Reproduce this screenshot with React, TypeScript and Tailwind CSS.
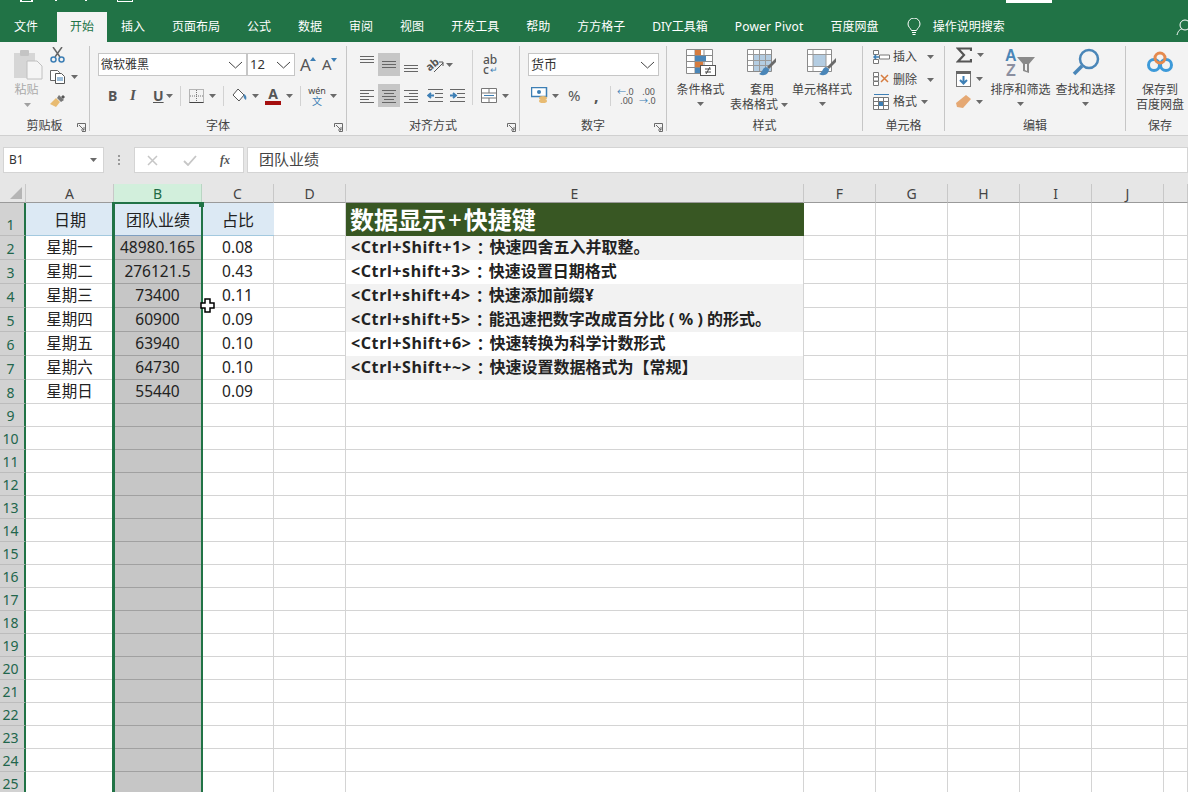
import type { ReactNode } from "react";

const CJK = "font-['Noto_Sans','Noto_Sans_CJK_SC',sans-serif]";

const TABS = ["开始", "插入", "页面布局", "公式", "数据", "审阅", "视图", "开发工具", "帮助", "方方格子", "DIY工具箱", "Power Pivot", "百度网盘"];

const COLS = [
  { name: "A", w: "w-[88px]" },
  { name: "B", w: "w-[88px]" },
  { name: "C", w: "w-[72px]" },
  { name: "D", w: "w-[72px]" },
  { name: "E", w: "w-[458px]" },
  { name: "F", w: "w-[72px]" },
  { name: "G", w: "w-[72px]" },
  { name: "H", w: "w-[72px]" },
  { name: "I", w: "w-[72px]" },
  { name: "J", w: "w-[72px]" },
  { name: "", w: "w-[24px]" },
];

const DATA = [
  ["星期一", "48980.165", "0.08"],
  ["星期二", "276121.5", "0.43"],
  ["星期三", "73400", "0.11"],
  ["星期四", "60900", "0.09"],
  ["星期五", "63940", "0.10"],
  ["星期六", "64730", "0.10"],
  ["星期日", "55440", "0.09"],
];

const NOTES: { key: string; body: ReactNode; band: boolean }[] = [
  { key: "<Ctrl+Shift+1>", body: "快速四舍五入并取整。", band: true },
  { key: "<Ctrl+shift+3>", body: "快速设置日期格式", band: false },
  { key: "<Ctrl+shift+4>", body: "快速添加前缀¥", band: true },
  {
    key: "<Ctrl+shift+5>",
    body: (
      <>
        能迅速把数字改成百分比
        <span className="inline-block w-[14px] text-center">(</span>%<span className="inline-block w-[14px] text-center">)</span>
        的形式。
      </>
    ),
    band: true,
  },
  { key: "<Ctrl+Shift+6>", body: "快速转换为科学计数形式", band: false },
  { key: "<Ctrl+Shift+~>", body: "快速设置数据格式为【常规】", band: true },
  { key: "", body: "", band: false },
];

function Caret({ className = "" }: { className?: string }) {
  return (
    <svg width="7" height="4" viewBox="0 0 7 4" className={"shrink-0 " + className}>
      <path d="M0 0h7L3.5 4z" fill="#6a6a6a" />
    </svg>
  );
}

function Chevron() {
  return (
    <svg width="15" height="8" viewBox="0 0 15 8" className="shrink-0">
      <path d="M1 1l6.5 6L14 1" fill="none" stroke="#444" strokeWidth="1" />
    </svg>
  );
}

function Launcher() {
  return (
    <svg width="9" height="9" viewBox="0 0 9 9" className="shrink-0">
      <path d="M.5 4V.5H8.500V8.500H5M2 2l5 5M7 4v3H4" fill="none" stroke="#6a6a6a" strokeWidth="1" />
    </svg>
  );
}

function Group({ w, label, launcher, children }: { w: string; label: string; launcher?: boolean; children: ReactNode }) {
  return (
    <div className={w + " h-full flex shrink-0"}>
      <div className="flex-1 min-w-0 flex flex-col">
        <div className="h-[75px] relative flex">{children}</div>
        <div className="flex-1 flex items-center justify-center relative text-[12px] text-[#444] leading-none">
          {label}
          {launcher && (
            <span className="absolute right-[3px] top-[6px]">
              <Launcher />
            </span>
          )}
        </div>
      </div>
      <div className="w-px h-[85px] mt-[4px] bg-[#c6c6c6]" />
    </div>
  );
}

function Sep({ h = "h-[20px]" }: { h?: string }) {
  return <div className={"w-px bg-[#d2d2d2] shrink-0 " + h} />;
}

function Lines({ rows, active }: { rows: number[][]; active?: boolean }) {
  return (
    <div className={"w-[22px] h-[23px] flex items-center justify-center shrink-0 " + (active ? "bg-[#c6c6c6]" : "")}>
      <svg width="16" height="14" viewBox="0 0 16 14" className="overflow-visible">
        {rows.map((r, i) => (
          <path key={i} d={"M" + r[0] + " " + (r[2] + 0.5) + "H" + r[1]} stroke="#666" strokeWidth="1" />
        ))}
      </svg>
    </div>
  );
}

const TOP_A = [[1, 15, -2], [1, 15, 1], [1, 15, 4]];
const MID_A = [[1, 15, 3], [1, 15, 6], [1, 15, 9]];
const BOT_A = [[1, 15, 7], [1, 15, 10], [1, 15, 13]];
const LEFT_A = [[1, 15, 1], [1, 10, 4], [1, 15, 7], [1, 10, 10], [1, 15, 13]];
const CENTER_A = [[1, 15, 1], [3, 13, 4], [1, 15, 7], [3, 13, 10], [1, 15, 13]];
const RIGHT_A = [[1, 15, 1], [6, 15, 4], [1, 15, 7], [6, 15, 10], [1, 15, 13]];

function Indent({ flip }: { flip?: boolean }) {
  return (
    <svg width="17" height="14" viewBox="0 0 17 14" className="shrink-0">
      <g stroke="#666" strokeWidth="1">
        <path d="M1 .5h15M8 4.500h8M8 8.500h8M1 12.500h15" />
      </g>
      <path d={flip ? "M1 6.500h5M4 4l3 2.500L4 9" : "M7 6.500H2M4 4L1 6.500 4 9"} fill="none" stroke="#3d7fb5" strokeWidth="1.800" />
    </svg>
  );
}

function Dropdown({ w, text, big }: { w: string; text: string; big?: boolean }) {
  return (
    <div className={w + " h-[23px] bg-white border border-[#c6c6c6] flex items-center justify-between pl-[2px] pr-[3px] shrink-0"}>
      <span className={(big ? "text-[13px]" : "text-[12px]") + " text-[#333] leading-none"}>{text}</span>
      <Chevron />
    </div>
  );
}

function Bigbtn({ w, icon, lines, caret }: { w: string; icon: ReactNode; lines: string[]; caret: "below" | "inline" | "none" }) {
  return (
    <div className={w + " flex flex-col items-center shrink-0"}>
      <div className="h-[40px] pt-[7px] flex items-start justify-center">{icon}</div>
      <div className="text-[12px] leading-[15px] text-[#444] text-center whitespace-nowrap flex flex-col items-center">
        {lines.map((l, i) => (
          <span key={i} className={"flex items-center gap-[3px] " + (caret === "inline" && i === lines.length - 1 ? "mr-[6px]" : "")}>
            {l}
            {caret === "inline" && i === lines.length - 1 && <Caret />}
          </span>
        ))}
      </div>
      {caret === "below" && <Caret className="mt-[5px]" />}
    </div>
  );
}

function StyleIcon({ kind }: { kind: "cond" | "table" | "cell" }) {
  if (kind === "cond") {
    return (
      <svg width="30" height="27" viewBox="0 0 30 27">
        <path d="M.5.5h26v24H.5zM9 .5v24M18 .5v24M.5 6.500h26M.5 12.500h26M.5 18.500h26" fill="#fff" stroke="#8a8a8a" strokeWidth="1" />
        <rect x="9" y="1" width="6" height="5" fill="#d67c3f" />
        <rect x="9" y="7" width="11" height="5" fill="#4a86b8" />
        <rect x="9" y="13" width="8" height="5" fill="#d67c3f" />
        <rect x="9" y="19" width="5" height="5" fill="#4a86b8" />
        <rect x="14.500" y="16.500" width="15" height="10" fill="#fff" stroke="#555" />
        <path d="M19 20h6M19 23h6M24 18l-4 7" stroke="#444" fill="none" strokeWidth="1" />
      </svg>
    );
  }
  return (
    <svg width="30" height="29" viewBox="0 0 30 29">
      <path d="M.5.5h24v22H.5z" fill="#fff" stroke="#8a8a8a" />
      {kind === "table" ? (
        <>
          <rect x="7" y="6" width="17" height="16" fill="#b4cde2" />
          <path d="M6.500 1v21M12.500 1v21M18.500 1v21M1 5.500h23M1 11.500h23M1 16.500h23" stroke="#9a9a9a" />
        </>
      ) : (
        <>
          <rect x="6" y="6" width="13" height="11" fill="#b4cde2" />
          <path d="M6 1v21M19 1v21M1 5.500h23M1 17.500h23" stroke="#9a9a9a" />
        </>
      )}
      <path d="M29 9l-9 9 2 2 7-7z" fill="#6a6a6a" />
      <path d="M19 18c-4 1-3 5-7 7 5 3 10 0 10-5z" fill="#4a86b8" />
    </svg>
  );
}

function CellRow({ icon, text, pad }: { icon: ReactNode; text: string; pad: string }) {
  return (
    <div className="h-[22.5px] flex items-center">
      <span className="w-[20px] shrink-0 flex">{icon}</span>
      <span className="text-[12px] text-[#444] leading-none">{text}</span>
      <Caret className={pad} />
    </div>
  );
}

function Ribbon() {
  return (
    <div className="h-[93px] bg-[#f3f3f3] flex shrink-0 overflow-hidden">
      <Group w="w-[90px]" label="剪贴板" launcher>
        <div className="w-[48px] pl-[9px] flex flex-col items-center pt-[8px]">
          <svg width="29" height="30" viewBox="0 0 29 30">
            <rect x="0" y="3" width="21" height="25" fill="#d6d6d6" />
            <rect x="6" y="0" width="9" height="6" rx="1" fill="#c4c4c4" />
            <path d="M13 11h10l5 5v13H13z" fill="#f5f5f5" stroke="#c0c0c0" />
          </svg>
          <span className="text-[12px] leading-none text-[#aaa] mt-[4px] -ml-[4px]">粘贴</span>
          <Caret className="mt-[7px] -ml-[2px] opacity-60" />
        </div>
        <div className="pl-[2px] pt-[5px] flex flex-col gap-[7px]">
          <svg width="15" height="16" viewBox="0 0 15 16">
            <path d="M3 0l7 10M12 0L5 10" stroke="#666" strokeWidth="1.500" fill="none" />
            <circle cx="3.500" cy="12.500" r="2.500" fill="none" stroke="#3d7fb5" strokeWidth="1.500" />
            <circle cx="11.500" cy="12.500" r="2.500" fill="none" stroke="#3d7fb5" strokeWidth="1.500" />
          </svg>
          <div className="flex items-center gap-[6px]">
            <svg width="15" height="14" viewBox="0 0 15 14">
              <path d="M.5.500h7l2 2v8H.5z" fill="#fff" stroke="#666" />
              <path d="M5.500 3.500h6l3 3v7h-9z" fill="#fff" stroke="#555" />
              <path d="M7 8h6M7 10h6" stroke="#3d7fb5" />
            </svg>
            <Caret />
          </div>
          <svg width="17" height="16" viewBox="0 0 17 16" className="mt-[1px]">
            <path d="M11 5l2-2 2 2-2 2z" fill="#555" />
            <path d="M9 3l5 5-3 2-4-4z" fill="#777" />
            <path d="M6 6l4 4-4 5-6-3z" fill="#e8bb72" />
          </svg>
        </div>
      </Group>

      <Group w="w-[257px]" label="字体" launcher>
        <div className="flex flex-col w-full pl-[8px] pt-[11px]">
          <div className="flex items-center h-[23px]">
            <Dropdown w="w-[149px]" text="微软雅黑" />
            <Dropdown w="w-[48px]" text="12" big />
            <span className="ml-[5px] flex items-end w-[22px] text-[17px] leading-none text-[#555]">
              A
              <svg width="6" height="4" viewBox="0 0 6 4" className="mb-[12px] -ml-[1px]"><path d="M3 0l3 4H0z" fill="#3d7fb5" /></svg>
            </span>
            <span className="flex items-end text-[15px] leading-none text-[#555]">
              A
              <svg width="6" height="4" viewBox="0 0 6 4" className="mb-[10px] -ml-[1px]"><path d="M3 4L6 0H0z" fill="#3d7fb5" /></svg>
            </span>
          </div>
          <div className="flex items-center h-[21px] mt-[9px] text-[#555]">
            <span className="ml-[10px] w-[22px] text-[14px] font-bold leading-none">B</span>
            <span className="w-[23px] text-[15px] italic font-bold leading-none font-['Liberation_Serif',serif]">I</span>
            <span className="w-[13px] text-[14px] font-bold underline leading-none">U</span>
            <Caret />
            <span className="w-[7px]" />
            <Sep />
            <svg width="15" height="14" viewBox="0 0 15 14" className="ml-[8px]">
              <path d="M.5.500h14v13H.5zM7.500 1v12M1 7h13" fill="none" stroke="#777" strokeDasharray="1 1" />
              <path d="M.5 13.500h14" stroke="#444" />
            </svg>
            <Caret className="ml-[5px]" />
            <span className="w-[7px]" />
            <Sep />
            <svg width="16" height="15" viewBox="0 0 16 15" className="ml-[8px]">
              <path d="M6 1l6 6-5 6-6-6z" fill="#fff" stroke="#555" />
              <path d="M12 6c2 1 3 3 2 6-2-1-3-3-2-6z" fill="#4a86b8" />
            </svg>
            <Caret className="ml-[4px]" />
            <span className="ml-[6px] w-[16px] flex flex-col items-center text-[14px] leading-[14px] font-bold">
              A
              <span className="w-[16px] h-[4px] bg-[#a50f0f]" />
            </span>
            <Caret className="ml-[5px]" />
            <span className="w-[7px]" />
            <Sep />
            <span className="ml-[8px] flex flex-col items-center w-[16px] text-[9px] leading-[10px] text-[#444]">
              wén
              <span className="text-[#3d7fb5] text-[10px] leading-[10px]">文</span>
            </span>
            <Caret className="ml-[5px]" />
          </div>
        </div>
      </Group>

      <Group w="w-[173px]" label="对齐方式" launcher>
        <div className="flex flex-col pl-[9px] pt-[11px]">
          <div className="flex items-center h-[23px]">
            <Lines rows={TOP_A} />
            <Lines rows={MID_A} active />
            <Lines rows={BOT_A} />
            <svg width="17" height="16" viewBox="0 0 17 16" className="ml-[5px] overflow-visible">
              <text x="-1" y="11" fontSize="11" fontWeight="bold" fill="#555" fontFamily="Noto Sans" transform="rotate(-40 6 8)">ab</text>
              <path d="M7 15l9-9M12 5h4v4" fill="none" stroke="#555" />
            </svg>
            <Caret className="ml-[2px]" />
          </div>
          <div className="flex items-center h-[23px] mt-[8px]">
            <Lines rows={LEFT_A} />
            <Lines rows={CENTER_A} active />
            <Lines rows={RIGHT_A} />
            <span className="w-[5px]" />
            <Indent />
            <span className="w-[5px]" />
            <Indent flip />
          </div>
        </div>
        <div className="ml-[6px] mt-[8px] flex">
          <Sep h="h-[55px]" />
        </div>
        <div className="flex flex-col pl-[8px] pt-[11px]">
          <div className="h-[23px] pl-[2px] flex flex-col items-start justify-center text-[12px] leading-[10px] font-medium text-[#555]">
            <span>ab</span>
            <span className="flex items-center">c<span className="text-[#3d7fb5] ml-[1px] text-[9px]">↵</span></span>
          </div>
          <div className="flex items-center h-[23px] mt-[8px]">
            <svg width="16" height="15" viewBox="0 0 16 15">
              <path d="M.5.500h15v14H.5zM1 5h14M1 10h14M8 1v4M8 10v4" fill="#fff" stroke="#777" />
              <path d="M3 7.500h10" stroke="#3d7fb5" />
            </svg>
            <Caret className="ml-[5px]" />
          </div>
        </div>
      </Group>

      <Group w="w-[147px]" label="数字" launcher>
        <div className="flex flex-col pl-[8px] pt-[11px]">
          <Dropdown w="w-[131px]" text="货币" big />
          <div className="flex items-center h-[21px] mt-[9px]">
            <svg width="18" height="18" viewBox="0 0 18 18" className="ml-[3px]">
              <rect x="0.500" y="0.500" width="15" height="9" fill="#fff" stroke="#3d7fb5" strokeWidth="1.500" />
              <circle cx="8" cy="5" r="2" fill="#3d7fb5" />
              <ellipse cx="12" cy="11" rx="4" ry="2" fill="#e8bb72" />
              <ellipse cx="12" cy="14" rx="4" ry="2" fill="#e8bb72" />
            </svg>
            <Caret className="ml-[3px]" />
            <span className="ml-[9px] w-[26px] text-[15px] text-[#555] leading-none">%</span>
            <span className="w-[16px] text-[16px] font-bold text-[#555] leading-none">,</span>
            <Sep />
            <span className="ml-[6px] w-[16px] flex flex-col text-[9px] leading-[9px] text-[#555] text-right">
              <span><span className="text-[#3d7fb5]">←</span>.0</span>
              <span>.00</span>
            </span>
            <span className="ml-[6px] w-[16px] flex flex-col text-[9px] leading-[9px] text-[#555] text-right">
              <span>.00</span>
              <span><span className="text-[#3d7fb5]">→</span>.0</span>
            </span>
          </div>
        </div>
      </Group>

      <Group w="w-[196px]" label="样式">
        <Bigbtn w="w-[67px]" caret="below" lines={["条件格式"]} icon={<StyleIcon kind="cond" />} />
        <Bigbtn w="w-[56px]" caret="inline" lines={["套用", "表格格式"]} icon={<StyleIcon kind="table" />} />
        <Bigbtn w="w-[64px]" caret="below" lines={["单元格样式"]} icon={<StyleIcon kind="cell" />} />
      </Group>

      <Group w="w-[82px]" label="单元格">
        <div className="pl-[10px] pt-[4px] flex flex-col">
          <CellRow
            pad="ml-[10px]"
            text="插入"
            icon={
              <svg width="17" height="15" viewBox="0 0 17 15">
                <path d="M.5.500h5v4h-5zM.5 9.500h5v4h-5zM6.500 5h10v4h-10z" fill="#fff" stroke="#777" />
                <path d="M6 7H1M3 5L1 7l2 2" fill="none" stroke="#3d7fb5" strokeWidth="1.500" />
              </svg>
            }
          />
          <CellRow
            pad="ml-[10px]"
            text="删除"
            icon={
              <svg width="17" height="15" viewBox="0 0 17 15">
                <path d="M.5.500h5v4h-5zM.5 5h5v4h-5zM.5 9.500h5v4h-5z" fill="#fff" stroke="#777" />
                <path d="M8 3l7 7M15 3l-7 7" stroke="#d67c3f" strokeWidth="1.500" />
              </svg>
            }
          />
          <CellRow
            pad="ml-[4px]"
            text="格式"
            icon={
              <svg width="17" height="16" viewBox="0 0 17 16">
                <path d="M1 .5h15" stroke="#3d7fb5" />
                <path d="M.5 3.500h15v12H.5zM5.500 4v11M10.500 4v11M1 7.500h14M1 11.500h14" fill="#fff" stroke="#777" />
                <rect x="6" y="8" width="4" height="4" fill="#3d7fb5" />
              </svg>
            }
          />
        </div>
      </Group>

      <Group w="w-[181px]" label="编辑">
        <div className="w-[44px] pl-[11px] pt-[5px] flex flex-col gap-[8px] shrink-0">
          <div className="flex items-center gap-[5px]">
            <svg width="16" height="16" viewBox="0 0 16 16" className="shrink-0">
              <path d="M15 4V1.500H2L8 8l-6 6.500h13V12" fill="none" stroke="#555" strokeWidth="2.200" />
            </svg>
            <Caret />
          </div>
          <div className="flex items-center gap-[5px]">
            <svg width="15" height="16" viewBox="0 0 15 16" className="shrink-0">
              <rect x=".5" y=".5" width="14" height="15" fill="#fff" stroke="#777" />
              <rect x="0" y="0" width="15" height="3" fill="#666" />
              <path d="M7.500 5v7M4 9l3.500 3.500L11 9" fill="none" stroke="#3d7fb5" strokeWidth="2" />
            </svg>
            <Caret />
          </div>
          <div className="flex items-center gap-[5px]">
            <svg width="15" height="14" viewBox="0 0 15 14" className="shrink-0">
              <path d="M10 0l5 4-8 9-6-1-1-4z" fill="#e5a873" />
            </svg>
            <Caret />
          </div>
        </div>
        <Bigbtn
          w="w-[63px]"
          caret="below"
          lines={["排序和筛选"]}
          icon={
            <svg width="31" height="28" viewBox="0 0 31 28" className="-mt-[1px] overflow-visible">
              <text x="0" y="13" fontSize="16" fontWeight="bold" fill="#4a86b8" fontFamily="Liberation Sans">A</text>
              <text x="1" y="28" fontSize="16" fontWeight="bold" fill="#8b8fa0" fontFamily="Liberation Sans">Z</text>
              <path d="M12 9h18l-6 7v9l-6-2v-7z" fill="#8a8a8a" />
              <path d="M20 16v6l2 1v-7z" fill="#f3f3f3" />
            </svg>
          }
        />
        <Bigbtn
          w="w-[67px]"
          caret="below"
          lines={["查找和选择"]}
          icon={
            <svg width="28" height="28" viewBox="0 0 28 28" className="-mt-[1px]">
              <circle cx="17" cy="11" r="9" fill="none" stroke="#4a86b8" strokeWidth="2.500" />
              <path d="M10 18l-8 8" stroke="#4a86b8" strokeWidth="3.500" />
            </svg>
          }
        />
      </Group>

      <div className="w-[62px] shrink-0 flex flex-col">
        <div className="h-[75px] flex">
          <Bigbtn
            w="w-[68px]"
            caret="none"
            lines={["保存到", "百度网盘"]}
            icon={
              <svg width="28" height="22" viewBox="0 0 28 22" className="mt-[2px]">
                <circle cx="8" cy="14" r="5.500" fill="none" stroke="#3d9ad9" strokeWidth="3" />
                <circle cx="20" cy="14" r="5.500" fill="none" stroke="#3d9ad9" strokeWidth="3" />
                <circle cx="14" cy="7" r="5" fill="none" stroke="#e58a4e" strokeWidth="3" />
              </svg>
            }
          />
        </div>
        <div className="flex-1 flex items-center justify-center text-[12px] leading-none text-[#444] pl-[6px]">保存</div>
      </div>
    </div>
  );
}

function HeaderCell({ name, w }: { name: string; w: string }) {
  const selected = name === "B";
  return (
    <div
      className={
        w +
        " h-full shrink-0 flex items-center justify-center text-[14px] leading-none pt-[1px] border-r border-b " +
        (selected ? "bg-[#d2efdc] text-[#1f6b45] border-r-[#b9d5c3] border-b-[#217346]" : "bg-[#e6e6e6] text-[#444] border-r-[#c8c8c8] border-b-[#9a9a9a]")
      }
    >
      {name}
    </div>
  );
}

function RowNum({ n, h }: { n: number; h: string }) {
  return (
    <div className={h + " w-[26px] shrink-0 bg-[#d2d2d2] text-[#22664c] text-[14px] leading-none flex items-end justify-center pb-[3px] pr-[3px] border-r-2 border-r-[#217346] border-b border-b-[#bcbcbc]"}>
      {n}
    </div>
  );
}

function Grid() {
  const lastCols = COLS.slice(5);
  return (
    <div className="relative flex-1 overflow-hidden bg-white text-[#222]">
      <div className="flex h-[19px]">
        <div className="w-[26px] h-full shrink-0 bg-[#e6e6e6] border-r border-b border-r-[#c8c8c8] border-b-[#9a9a9a] flex items-end justify-end pr-[3px] pb-[3px]">
          <svg width="12" height="12" viewBox="0 0 12 12">
            <path d="M12 0v12H0z" fill="#b5b5b5" />
          </svg>
        </div>
        {COLS.map((c) => (
          <HeaderCell key={c.name} name={c.name} w={c.w} />
        ))}
      </div>

      <div className="flex h-[33px]">
        <RowNum n={1} h="h-[33px]" />
        <div className="w-[88px] bg-[#dce9f4] border-b border-b-[#a3c9df] flex items-center justify-center text-[16px] pt-[2px]">日期</div>
        <div className="w-[88px] bg-[#dce9f4] border-b border-b-[#7f9fc0] flex items-center justify-center text-[16px] pt-[2px]">团队业绩</div>
        <div className="w-[72px] bg-[#dce9f4] border-b border-b-[#a3c9df] flex items-center justify-center text-[16px] pt-[2px]">占比</div>
        <div className="w-[72px] border-r border-b border-[#d4d4d4]" />
        <div className="w-[458px] bg-[#385723] text-white font-bold text-[24px] leading-none flex items-center pl-[4px]">
          数据显示<span className="mx-[2px] font-medium">+</span>快捷键
        </div>
        {lastCols.map((c) => (
          <div key={c.name} className={c.w + " shrink-0 border-r border-b border-[#d4d4d4]"} />
        ))}
      </div>

      {DATA.map((row, i) => (
        <div key={i} className="flex h-[24px]">
          <RowNum n={i + 2} h="h-[24px]" />
          <div className="w-[88px] shrink-0 border-r border-b border-[#d4d4d4] flex items-center justify-center text-[15.500px] leading-none">{row[0]}</div>
          <div className="w-[88px] shrink-0 bg-[#c6c6c6] border-b border-b-[#a0a0a0] border-r border-r-white flex items-center justify-center text-[15.500px] leading-none">{row[1]}</div>
          <div className="w-[72px] shrink-0 border-r border-b border-[#d4d4d4] flex items-center justify-center text-[15.500px] leading-none">{row[2]}</div>
          <div className="w-[72px] shrink-0 border-r border-b border-[#d4d4d4]" />
          <div className={"w-[458px] shrink-0 border-r border-[#d4d4d4] flex items-center pl-[5px] pb-[2px] font-bold text-[16px] leading-none whitespace-nowrap " + (NOTES[i].band ? "bg-[#f2f2f2] " : "") + (i === 6 ? "border-b" : "")}>
            {NOTES[i].key && (
              <>
                <span className="tracking-[0.6px]">{NOTES[i].key}</span>
                <span className="w-[18px] text-center font-['Noto_Sans_CJK_TC',sans-serif]">：</span>
              </>
            )}
            <span>{NOTES[i].body}</span>
          </div>
          {lastCols.map((c) => (
            <div key={c.name} className={c.w + " shrink-0 border-r border-b border-[#d4d4d4]"} />
          ))}
        </div>
      ))}

      {Array.from({ length: 17 }, (_, i) => i + 9).map((n) => (
        <div key={n} className="flex h-[23px]">
          <RowNum n={n} h="h-[23px]" />
          {COLS.map((c) => (
            <div key={c.name} className={c.w + " shrink-0 border-b " + (c.name === "B" ? "bg-[#c6c6c6] border-b-[#a0a0a0] border-r border-r-white" : "border-r border-[#d4d4d4]")} />
          ))}
        </div>
      ))}

      {/* selected column outline */}
      <div className="absolute left-[112px] top-[18px] bottom-0 w-[91px] border-t-2 border-l-[3px] border-r-2 border-[#217346] pointer-events-none" />
      <div className="absolute left-[199px] top-[18px] w-[5px] h-[5px] bg-[#217346]" />

      {/* mouse cursor */}
      <svg width="15" height="15" viewBox="0 0 15 15" className="absolute left-[200px] top-[114px]">
        <path d="M5 1h5v4h4v5h-4v4H5v-4H1V5h4z" fill="#fff" stroke="#000" strokeWidth="1.500" />
      </svg>
    </div>
  );
}

export default function App() {
  return (
    <div className={"w-[1188px] h-[792px] overflow-hidden flex flex-col bg-[#e6e6e6] " + CJK}>
      {/* top of the title bar, mostly cut off */}
      <div className="h-[12px] bg-[#217346] flex shrink-0 items-start">
        <div className="ml-[20px] w-[13px] h-[2px] border-x-2 border-b border-white" />
        <div className="ml-[22px] w-[2px] h-[1px] bg-white" />
        <div className="ml-[28px] w-[2px] h-[1px] bg-white" />
        <div className="ml-[30px] w-[16px] h-[2px] border-x border-b border-white" />
        <div className="ml-[873px] w-[46px] h-[3px] bg-white" />
      </div>

      <div className="h-[30px] bg-[#217346] flex shrink-0 text-[12px] text-white leading-none">
        <div className="ml-[1px] h-full px-[13px] flex items-center">文件</div>
        <div className="ml-[6px] flex gap-[1px] h-full">
          {TABS.map((t, i) => (
            <div key={t} className={"h-full px-[13px] flex items-center whitespace-nowrap " + (i === 0 ? "bg-[#f3f3f3] text-[#217346]" : "") + (t === "Power Pivot" ? " tracking-[0.2px]" : "")}>
              {t}
            </div>
          ))}
        </div>
        <div className="ml-[15px] h-full flex items-center gap-[12px]">
          <svg width="14" height="18" viewBox="0 0 14 18">
            <path d="M4.500 12.500C3.500 10 1 9 1 6a6 6 0 0 1 12 0c0 3-2.500 4-3.500 6.500zM5 14.500h4M5.500 16.500h3" fill="none" stroke="#fff" />
          </svg>
          操作说明搜索
        </div>
        <div className="ml-auto mr-[-4px] h-full flex items-center">
          <svg width="16" height="18" viewBox="0 0 16 18">
            <circle cx="9" cy="7" r="5" fill="none" stroke="#fff" />
            <path d="M1 17c1-4 3-6 5-6" fill="none" stroke="#fff" />
          </svg>
        </div>
      </div>

      <Ribbon />

      {/* formula bar */}
      <div className="h-[49px] shrink-0 bg-[#e6e6e6] border-t border-t-[#d0d0d0] flex items-start pt-[11px]">
        <div className="ml-[3px] w-[101px] h-[26px] bg-white border border-[#d4d4d4] flex items-center justify-between pl-[5px] pr-[6px] text-[12px] text-[#333] leading-none">
          B1
          <Caret />
        </div>
        <div className="w-[30px] h-[26px] flex flex-col items-center justify-center gap-[2px]">
          <span className="w-[2px] h-[2px] bg-[#999]" />
          <span className="w-[2px] h-[2px] bg-[#999]" />
          <span className="w-[2px] h-[2px] bg-[#999]" />
        </div>
        <div className="w-[110px] h-[26px] bg-white border border-[#d4d4d4] flex items-center pl-[12px]">
          <svg width="11" height="11" viewBox="0 0 11 11">
            <path d="M1 1l9 9M10 1l-9 9" stroke="#c6c6c6" strokeWidth="1.500" />
          </svg>
          <svg width="14" height="11" viewBox="0 0 14 11" className="ml-[25px]">
            <path d="M1 6l4 4 8-9" fill="none" stroke="#c6c6c6" strokeWidth="1.800" />
          </svg>
          <span className="ml-[23px] text-[12px] italic font-bold text-[#555] leading-none font-['Liberation_Serif',serif]">fx</span>
        </div>
        <div className="ml-[3px] flex-1 h-[26px] bg-white border border-[#d4d4d4] flex items-center pl-[11px] pb-[2px] text-[15px] text-[#444] leading-none">团队业绩</div>
      </div>

      <Grid />
    </div>
  );
}
